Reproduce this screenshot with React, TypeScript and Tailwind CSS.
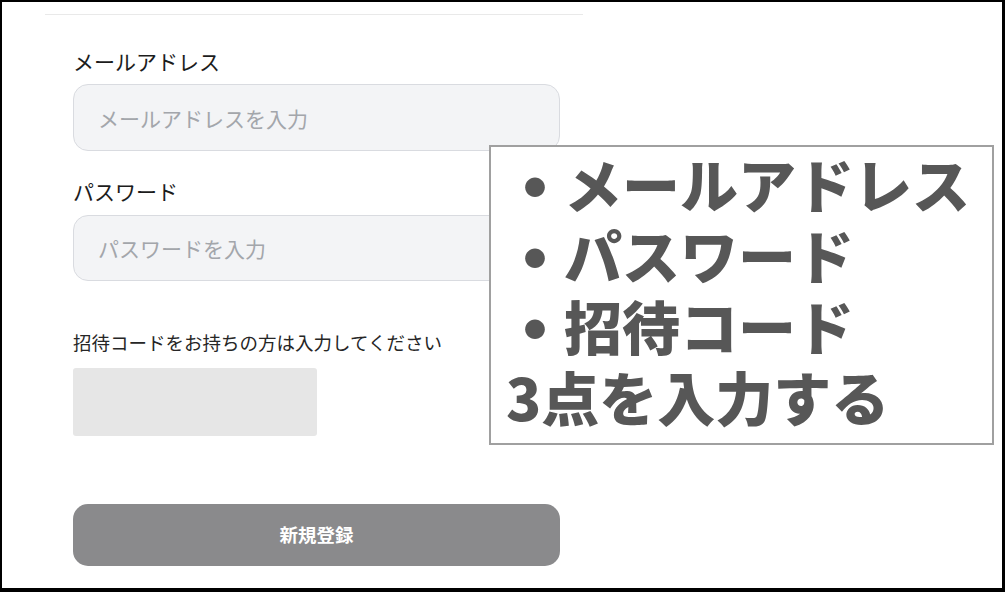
export default function App() {
  const jp = { fontFamily: '"Noto Sans CJK JP", "Noto Sans", sans-serif' }
  const items = ["メールアドレス", "パスワード", "招待コード"]
  return (
    <div className="w-[1007px] h-[592px] bg-white" style={jp}>
      <div className="relative w-[1005px] h-[592px] bg-white border-black border-t-2 border-l-2 border-r-[3px] border-b-4">
        {/* top divider */}
        <div className="ml-[43px] mt-[12px] w-[538px] h-px bg-[#e9e9e9]" />

        <form className="ml-[71px] w-[487px] flex flex-col">
          <label className="mt-[32px] text-[21px] leading-[28px] text-[#1c1c1c]">メールアドレス</label>
          <input
            type="email"
            placeholder="メールアドレスを入力"
            className="mt-[9px] h-[67px] w-full rounded-[15px] border border-[#d9dbe0] bg-[#f3f4f6] px-[24px] text-[21px] placeholder:text-[#a3a6ab] outline-none"
          />

          <label className="mt-[26px] text-[21px] leading-[28px] text-[#1c1c1c]">パスワード</label>
          <input
            type="password"
            placeholder="パスワードを入力"
            className="mt-[10px] h-[66px] w-full rounded-[15px] border border-[#d9dbe0] bg-[#f3f4f6] px-[24px] text-[21px] placeholder:text-[#a3a6ab] outline-none"
          />

          <label className="mt-[48px] text-[18.5px] leading-[26px] text-[#262626]">
            招待コードをお持ちの方は入力してください
          </label>
          <div className="mt-[13px] h-[68px] w-[244px] rounded-[3px] bg-[#e6e6e6]" />

          <button
            type="button"
            className="mt-[68px] h-[62px] w-full rounded-[15px] bg-[#8a8a8c] text-[18.5px] font-semibold text-white"
          >
            新規登録
          </button>
        </form>

        {/* annotation overlay */}
        <div className="absolute left-[487px] top-[143px] w-[505px] h-[300px] border-2 border-[#a0a0a0] bg-white pl-[15px] pt-[1px]">
          <div className="text-[58px] leading-[71px] font-black text-[#575757] whitespace-nowrap">
            {items.map((item) => (
              <div key={item} className="flex">
                <span className="flex w-[58px] h-[71px] items-center justify-center text-[70px] leading-none">・</span>
                <span>{item}</span>
              </div>
            ))}
            <div>3点を入力する</div>
          </div>
        </div>
      </div>
    </div>
  )
}
